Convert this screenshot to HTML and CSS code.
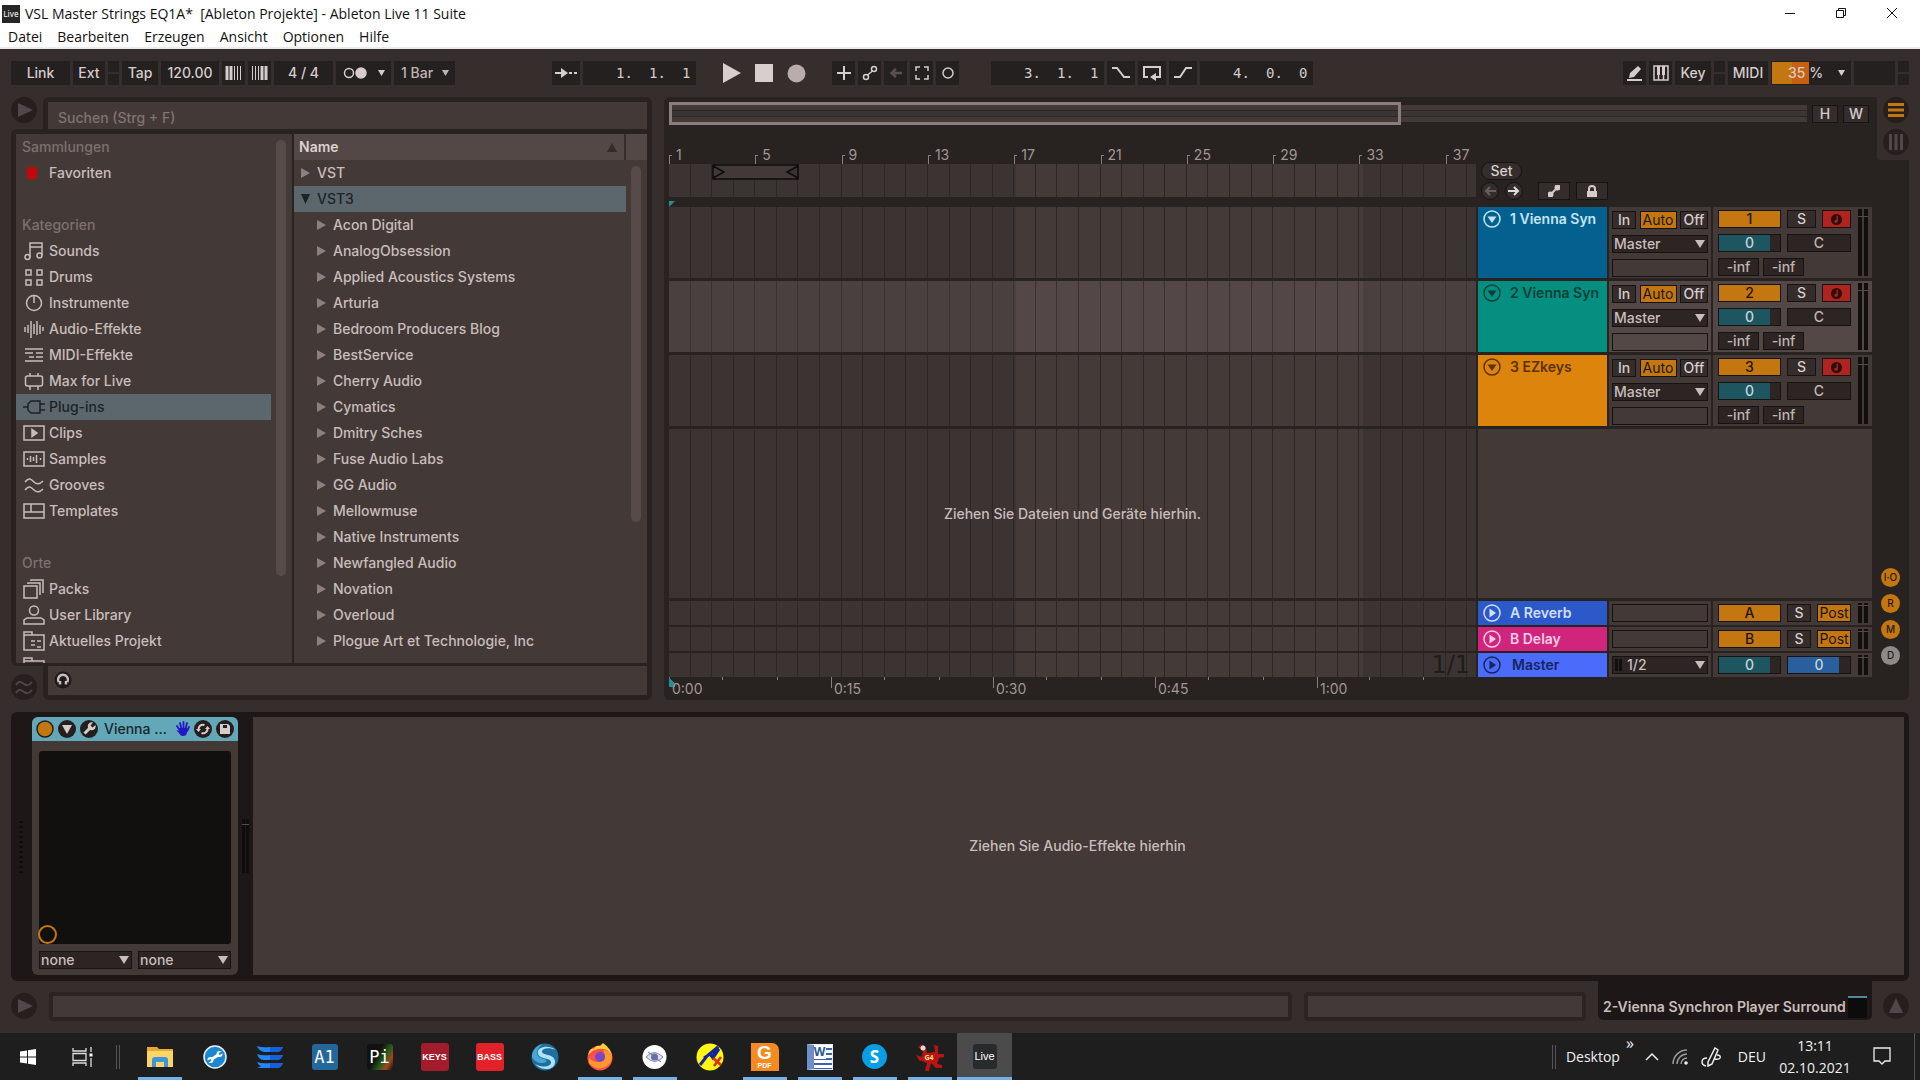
FILE: index.html
```html
<!DOCTYPE html>
<html lang="de">
<head>
  <meta charset="utf-8">
  <title>VSL Master Strings EQ1A* [Ableton Projekte] - Ableton Live 11 Suite</title>
  <link rel="stylesheet" href="styles.css">
</head>
<body>

<!-- Icons, die mehrfach vorkommen -->
<svg class="defs" aria-hidden="true">
  <symbol id="i-play" viewBox="0 0 26 26"><path d="M7 6v14l15-7z" fill="currentColor"/></symbol>
  <symbol id="i-fold" viewBox="0 0 18 18"><circle cx="9" cy="9" r="8" fill="none" stroke="currentColor" stroke-width="1.500"/><path d="M4.500 6.500h9L9 13z" fill="currentColor"/></symbol>
  <symbol id="i-launch" viewBox="0 0 18 18"><circle cx="9" cy="9" r="8" fill="none" stroke="currentColor" stroke-width="1.500"/><path d="M6.500 4.500v9L13 9z" fill="currentColor"/></symbol>
  <symbol id="i-note" viewBox="0 0 12 12"><circle cx="6" cy="6" r="6" fill="#2a0f0c"/><path d="M6 2h1.500v6a2 1.500 0 1 1-1.500-1.500z" fill="#b1231f"/></symbol>
  <symbol id="i-folder" viewBox="0 0 22 22"><path d="M1 5v15h20V5H1V2h8v3" /><path d="M8 11h4M14 11h4M8 15h4M14 17h4"/></symbol>
</svg>

<header class="window">
  <div class="titlebar">
    <span class="app-icon">Live</span>
    <span class="title">VSL Master Strings EQ1A*&nbsp; [Ableton Projekte] - Ableton Live 11 Suite</span>
    <div class="window-buttons">
      <button aria-label="Minimieren"><svg width="12" height="12"><path d="M1 6.500h10"/></svg></button>
      <button aria-label="Verkleinern"><svg width="12" height="12"><path d="M1.500 3.500h7v7h-7zM3.500 3.500v-2h7v7h-2"/></svg></button>
      <button aria-label="Schließen"><svg width="12" height="12"><path d="M1 1l10 10M11 1L1 11"/></svg></button>
    </div>
  </div>
  <nav class="menu">
    <a href="#">Datei</a><a href="#">Bearbeiten</a><a href="#">Erzeugen</a><a href="#">Ansicht</a><a href="#">Optionen</a><a href="#">Hilfe</a>
  </nav>
</header>

<main class="live">

  <div class="toolbar">
    <div class="group">
      <button class="tb w59">Link</button>
      <button class="tb w32">Ext</button>
      <span class="leds"></span>
      <button class="tb w36">Tap</button>
      <button class="tb w58">120.00</button>
      <button class="tb w23" aria-label="Tempo runter"><svg width="17" height="16"><path d="M2 1v14M6 1v14" stroke-width="3"/><path d="M9.500 1v14M12.500 1v14M15.500 1v14" stroke-width="1"/></svg></button>
      <button class="tb w23" aria-label="Tempo rauf"><svg width="17" height="16"><path d="M1.500 1v14M4.500 1v14M7.500 1v14" stroke-width="1"/><path d="M11 1v14M15 1v14" stroke-width="3"/></svg></button>
      <button class="tb w59 sig">4 / 4</button>
      <button class="tb w55 drop" aria-label="Metronom"><svg width="24" height="12"><circle cx="6" cy="6" r="4.500" fill="none"/><circle cx="18" cy="6" r="5" fill="currentColor"/></svg></button>
      <button class="tb w61 drop dim">1 Bar</button>
    </div>

    <div class="group transport">
      <button class="tb w28" aria-label="Folgen"><svg width="22" height="12"><path d="M0 6h9" stroke-width="2"/><path d="M6 1l7 5-7 5z" fill="currentColor" stroke="none"/><path d="M14 6h3M19 6h3" stroke-width="2"/></svg></button>
      <button class="tb pos"><span>1.</span><span>1.</span><span>1</span></button>
      <div class="play-keys">
        <button aria-label="Start"><svg width="18" height="20"><path d="M0 0v20l18-10z"/></svg></button>
        <button aria-label="Stopp"><svg width="18" height="18"><path d="M0 0h18v18H0z"/></svg></button>
        <button aria-label="Aufnahme" class="rec"><svg width="19" height="19"><circle cx="9.500" cy="9.500" r="9"/></svg></button>
      </div>
      <button class="tb w23" aria-label="Overdub"><svg width="14" height="14"><path d="M7 0v14M0 7h14" stroke-width="2"/></svg></button>
      <button class="tb w23" aria-label="Automation"><svg width="16" height="16"><circle cx="4" cy="12" r="2.500" fill="none"/><circle cx="12" cy="4" r="2.500" fill="none"/><path d="M5.500 10l5-4"/></svg></button>
      <button class="tb w23 off" aria-label="Automation reaktivieren"><svg width="14" height="12"><path d="M5 6h8M7 2L2.500 6 7 10" stroke-width="2.500" fill="none"/></svg></button>
      <button class="tb w23" aria-label="Capture"><svg width="14" height="14"><path d="M1 5V1h4M9 1h4v4M13 9v4H9M5 13H1V9" fill="none"/></svg></button>
      <button class="tb w23" aria-label="Session-Aufnahme"><svg width="14" height="14"><circle cx="7" cy="7" r="5" fill="none"/></svg></button>
      <button class="tb pos loop-pos"><span>3.</span><span>1.</span><span>1</span></button>
      <button class="tb w28" aria-label="Punch-in"><svg width="20" height="12"><path d="M1 1h5l7 9h6" fill="none" stroke-width="2"/></svg></button>
      <button class="tb w28" aria-label="Loop"><svg width="20" height="16"><path d="M6 12H2V2h16v10h-5" fill="none" stroke-width="2"/><path d="M14 8v8l-6-4z" fill="currentColor" stroke="none"/></svg></button>
      <button class="tb w28" aria-label="Punch-out"><svg width="20" height="12"><path d="M1 10h6l6-9h6" fill="none" stroke-width="2"/></svg></button>
      <button class="tb pos"><span>4.</span><span>0.</span><span>0</span></button>
    </div>

    <div class="group right">
      <button class="tb w23" aria-label="Zeichnen"><svg width="16" height="16"><path d="M2 13l1-5 8-7 3 3-7 8z" fill="currentColor" stroke="none"/><path d="M0 15h15" stroke-width="2"/></svg></button>
      <button class="tb w23" aria-label="Tastatur"><svg width="16" height="16"><path d="M1 1h14v14H1zM5.500 9v6M10.500 9v6" fill="none"/><path d="M5.500 1v9M10.500 1v9" stroke-width="3"/></svg></button>
      <button class="tb w36">Key</button>
      <span class="leds"></span>
      <button class="tb w40">MIDI</button>
      <button class="tb cpu drop"><i class="cpu-bar"></i><b>35 %</b></button>
      <span class="tb w41"></span>
      <span class="leds"></span>
    </div>
  </div>

  <div class="upper">

    <section class="browser">
      <div class="search-row">
        <button class="round" aria-label="Browser"><svg width="26" height="26"><use href="#i-play"/></svg></button>
        <div class="search-frame"><input type="text" aria-label="Suchen" placeholder="Suchen (Strg + F)"></div>
      </div>
      <div class="lists">
        <div class="places">
          <ul>
            <li class="head">Sammlungen</li>
            <li><i class="fav"></i>Favoriten</li>
            <li></li>
            <li class="head">Kategorien</li>
            <li><svg viewBox="0 0 22 22"><circle cx="4.500" cy="17" r="2.500"/><circle cx="16.500" cy="15.500" r="2.500"/><path d="M7 17V3h12v12.500M7 7h12"/></svg>Sounds</li>
            <li><svg viewBox="0 0 22 22"><path d="M3 4h5v5H3zM14 4h5v5h-5zM3 14h5v5H3zM14 14h5v5h-5z"/></svg>Drums</li>
            <li><svg viewBox="0 0 22 22"><circle cx="11" cy="11" r="7.500"/><path d="M11 3v8"/></svg>Instrumente</li>
            <li><svg viewBox="0 0 22 22"><path d="M2 9v5M5 7v8M8 3v17M11 6v10M14 3v14M17 7v9M20 9v4"/></svg>Audio-Effekte</li>
            <li><svg viewBox="0 0 22 22"><path d="M2 5h18M2 17h18M2 9h8M13 9h7M6 13h5M13 13h7"/></svg>MIDI-Effekte</li>
            <li><svg viewBox="0 0 22 22"><rect x="2.500" y="6" width="17" height="10" rx="2"/><path d="M7 3v3M15 3v3M7 16v4M15 16v4"/></svg>Max for Live</li>
            <li class="selected"><svg viewBox="0 0 22 22"><path d="M0 11h5M8 5h9v12H8l-3-3V8zM17 8h5M17 14h5"/></svg>Plug-ins</li>
            <li><svg viewBox="0 0 22 22"><path d="M1 4h20v14H1z"/><path d="M9 7.500v7l5-3.500z" fill="currentColor"/></svg>Clips</li>
            <li><svg viewBox="0 0 22 22"><path d="M1 4h20v14H1zM4.500 10v2M7.500 8v6M10.500 9v4M13.500 7v8M17.500 10v2"/></svg>Samples</li>
            <li><svg viewBox="0 0 22 22"><path d="M2 8c4-5 6-3 9 0s6 2 9-1M2 16c4-5 6-3 9 0s6 2 9-1"/></svg>Grooves</li>
            <li><svg viewBox="0 0 22 22"><path d="M1 4h20v14H1zM1 12h20M8 4v8"/></svg>Templates</li>
            <li></li>
            <li class="head">Orte</li>
            <li><svg viewBox="0 0 22 22"><path d="M1 8h13v12H1zM5 6V5h12v12M8 3V2h12v13"/></svg>Packs</li>
            <li><svg viewBox="0 0 22 22"><circle cx="11" cy="6.500" r="4.500"/><path d="M1 20v-4l3-2h14l3 2v4z"/></svg>User Library</li>
            <li><svg><use href="#i-folder"/></svg>Aktuelles Projekt</li>
            <li><svg><use href="#i-folder"/></svg></li>
          </ul>
          <i class="scroll"></i>
        </div>
        <div class="content">
          <div class="col-head"><span>Name</span><i class="sort"></i></div>
          <div class="tree">
            <ul>
              <li class="top">VST</li>
              <li class="top open">VST3</li>
              <li>Acon Digital</li>
              <li>AnalogObsession</li>
              <li>Applied Acoustics Systems</li>
              <li>Arturia</li>
              <li>Bedroom Producers Blog</li>
              <li>BestService</li>
              <li>Cherry Audio</li>
              <li>Cymatics</li>
              <li>Dmitry Sches</li>
              <li>Fuse Audio Labs</li>
              <li>GG Audio</li>
              <li>Mellowmuse</li>
              <li>Native Instruments</li>
              <li>Newfangled Audio</li>
              <li>Novation</li>
              <li>Overloud</li>
              <li>Plogue Art et Technologie, Inc</li>
            </ul>
            <i class="scroll"></i>
          </div>
        </div>
      </div>
      <div class="preview-row">
        <button class="round" aria-label="Groove Pool"><svg width="26" height="26"><path d="M5 11c3-5 5-3 8-1s5 2 8-2M5 19c3-5 5-3 8-1s5 2 8-2" fill="none" stroke="currentColor" stroke-width="2"/></svg></button>
        <div class="preview-frame"><div class="preview"><button aria-label="Vorhören"><svg width="18" height="18"><circle cx="9" cy="9" r="8.500" fill="#1f1a19"/><path d="M6 13.500V10M12 13.500V10M4.500 11a5 5 0 1 1 9 0" fill="none" stroke="#c9bdbb" stroke-width="2.500"/></svg></button></div></div>
      </div>
    </section>

    <section class="arrangement">
      <div class="arr-main">
        <div class="overview-row">
          <div class="overview"><i class="view-box"></i></div>
          <button class="btn w26">H</button>
          <button class="btn w26">W</button>
        </div>

        <div class="time-head">
          <div>
            <div class="bars"><span>1</span><span>5</span><span>9</span><span>13</span><span>17</span><span>21</span><span>25</span><span>29</span><span>33</span><span>37</span></div>
            <div class="scrub grid-lines"><i class="loop"><svg width="87" height="16"><path d="M1 1h85v14H1zM1 2l11 6-11 6M86 2L75 8l11 6"/></svg></i></div>
            <i class="insert"></i>
          </div>
          <div class="locators">
            <button class="set">Set</button>
            <div class="loc-row">
              <button class="circ off" aria-label="Voriger Locator"><svg width="12" height="10"><path d="M12 5H3M6 1L2 5l4 4"/></svg></button>
              <button class="circ" aria-label="Nächster Locator"><svg width="12" height="10"><path d="M0 5h9M6 1l4 4-4 4"/></svg></button>
              <button class="btn w32 first" aria-label="Automation anzeigen"><svg width="12" height="12"><path d="M2.500 9.500l7-7"/><circle cx="2.500" cy="9.500" r="2" fill="currentColor"/><circle cx="9.500" cy="2.500" r="2" fill="currentColor"/></svg></button>
              <button class="btn w32" aria-label="Hüllkurven sperren"><svg width="12" height="12"><path d="M1 6h10v6H1z" fill="currentColor" stroke="none"/><path d="M3 6V4a3 3 0 0 1 6 0v2" fill="none"/></svg></button>
            </div>
          </div>
        </div>

        <div class="tracks">
          <div class="track">
            <div class="lane grid-lines"></div>
            <div class="name blue"><svg><use href="#i-fold"/></svg>1 Vienna Syn</div>
            <div class="io">
              <div class="row"><button class="btn w24">In</button><button class="btn w37 on thin">Auto</button><button class="btn w28">Off</button></div>
              <span class="select"><select aria-label="Ausgang Spur 1"><option>Master</option></select></span>
              <span class="slot"></span>
            </div>
            <div class="mix">
              <div class="row"><button class="btn w63 on">1</button><button class="btn w29">S</button><button class="btn w29 arm" aria-label="Scharf"><svg width="11" height="11"><use href="#i-note"/></svg></button></div>
              <div class="row"><span class="btn w63 vol">0</span><span class="btn w64 dim">C</span></div>
              <div class="row tight"><span class="btn w41 dim">-inf</span><span class="btn w41 dim">-inf</span></div>
              <i class="meter"></i>
            </div>
          </div>
          <div class="track active">
            <div class="lane grid-lines"></div>
            <div class="name green"><svg><use href="#i-fold"/></svg>2 Vienna Syn</div>
            <div class="io">
              <div class="row"><button class="btn w24">In</button><button class="btn w37 on thin">Auto</button><button class="btn w28">Off</button></div>
              <span class="select"><select aria-label="Ausgang Spur 2"><option>Master</option></select></span>
              <span class="slot"></span>
            </div>
            <div class="mix">
              <div class="row"><button class="btn w63 on">2</button><button class="btn w29">S</button><button class="btn w29 arm" aria-label="Scharf"><svg width="11" height="11"><use href="#i-note"/></svg></button></div>
              <div class="row"><span class="btn w63 vol">0</span><span class="btn w64 dim">C</span></div>
              <div class="row tight"><span class="btn w41 dim">-inf</span><span class="btn w41 dim">-inf</span></div>
              <i class="meter"></i>
            </div>
          </div>
          <div class="track">
            <div class="lane grid-lines"></div>
            <div class="name orange"><svg><use href="#i-fold"/></svg>3 EZkeys</div>
            <div class="io">
              <div class="row"><button class="btn w24">In</button><button class="btn w37 on thin">Auto</button><button class="btn w28">Off</button></div>
              <span class="select"><select aria-label="Ausgang Spur 3"><option>Master</option></select></span>
              <span class="slot"></span>
            </div>
            <div class="mix">
              <div class="row"><button class="btn w63 on">3</button><button class="btn w29">S</button><button class="btn w29 arm" aria-label="Scharf"><svg width="11" height="11"><use href="#i-note"/></svg></button></div>
              <div class="row"><span class="btn w63 vol">0</span><span class="btn w64 dim">C</span></div>
              <div class="row tight"><span class="btn w41 dim">-inf</span><span class="btn w41 dim">-inf</span></div>
              <i class="meter"></i>
            </div>
          </div>
          <div class="empty">
            <div class="lane grid-lines hint">Ziehen Sie Dateien und Geräte hierhin.</div>
            <div class="blank"></div>
          </div>
        </div>

        <div class="returns">
          <div class="track">
            <div class="lane grid-lines"></div>
            <div class="name reverb"><svg><use href="#i-launch"/></svg>A Reverb</div>
            <div class="io"><span class="slot"></span></div>
            <div class="mix">
              <div class="row"><button class="btn w63 on">A</button><button class="btn w24">S</button><button class="btn w34 on thin">Post</button></div>
              <i class="meter"></i>
            </div>
          </div>
          <div class="track">
            <div class="lane grid-lines"></div>
            <div class="name delay"><svg><use href="#i-launch"/></svg>B Delay</div>
            <div class="io"><span class="slot"></span></div>
            <div class="mix">
              <div class="row"><button class="btn w63 on">B</button><button class="btn w24">S</button><button class="btn w34 on thin">Post</button></div>
              <i class="meter"></i>
            </div>
          </div>
          <div class="track">
            <div class="lane grid-lines quant">1/1</div>
            <div class="name master"><svg><use href="#i-launch"/></svg>Master</div>
            <div class="io"><span class="select cue"><select aria-label="Ausgang Master"><option>1/2</option></select></span></div>
            <div class="mix">
              <div class="row"><span class="btn w63 vol">0</span><span class="btn w64 vol cuevol">0</span></div>
              <i class="meter"></i>
            </div>
          </div>
        </div>

        <div class="seconds"><span>0:00</span><span>0:15</span><span>0:30</span><span>0:45</span><span>1:00</span></div>
      </div>

      <div class="arr-side">
        <div class="views">
          <button class="round lit" aria-label="Arrangement"><svg width="26" height="26"><path d="M5 7.500h16M5 13h16M5 18.500h16" stroke="currentColor" stroke-width="3"/></svg></button>
          <button class="round" aria-label="Session"><svg width="26" height="26"><path d="M7.500 5v16M13 5v16M18.500 5v16" stroke="currentColor" stroke-width="3"/></svg></button>
        </div>
        <div class="toggles">
          <button>I·O</button><button>R</button><button>M</button><button class="grey">D</button>
        </div>
      </div>
    </section>
  </div>

  <section class="devices">
    <div class="grip"></div>
    <div class="device">
      <div class="dev-head">
        <svg width="18" height="18"><circle cx="9" cy="9" r="8" fill="#c47711" stroke="#241f1e" stroke-width="1.500"/></svg>
        <svg width="18" height="18"><circle cx="9" cy="9" r="9" fill="#241f1e"/><path d="M4 5h10l-5 9z" fill="#d5cccb"/></svg>
        <svg width="18" height="18"><circle cx="9" cy="9" r="9" fill="#241f1e"/><path d="M4.500 13.500l6-6" stroke="#d5cccb" stroke-width="3"/><path d="M13 2.500l-2.500 3 2 2 3-2.500a4 4 0 1 1-2.500-2.500z" fill="#d5cccb"/></svg>
        <span>Vienna ...</span>
        <svg width="14" height="16"><path d="M3.500 9L1 5M5.500 8L4 2M7.500 8V1M9.500 8l1.500-6M11 10l2-4" stroke="#2416c4" stroke-width="1.800" stroke-linecap="round"/><path d="M0 9l3 1V7h8v4c0 3-2 4-4 4s-3-1-4-3z" fill="#2416c4"/></svg>
        <svg width="18" height="18"><circle cx="9" cy="9" r="9" fill="#241f1e"/><path d="M4.500 10a4.500 4.500 0 0 1 6-5M13.500 8a4.500 4.500 0 0 1-6 5" fill="none" stroke="#d5cccb" stroke-width="2"/><path d="M2 9h5l-2.500 3zM16 9h-5l2.500-3z" fill="#d5cccb"/></svg>
        <svg width="18" height="18"><circle cx="9" cy="9" r="9" fill="#241f1e"/><path d="M4 4h8l2 2v8H4z" fill="#d5cccb"/><path d="M7 5h4v3H7z" fill="#241f1e"/></svg>
      </div>
      <div class="dev-body">
        <div class="xy"></div>
        <div class="dev-selects">
          <span class="select"><select aria-label="X-Achse"><option>none</option></select></span>
          <span class="select"><select aria-label="Y-Achse"><option>none</option></select></span>
        </div>
      </div>
    </div>
    <div class="dev-meter"></div>
    <div class="dev-drop">Ziehen Sie Audio-Effekte hierhin</div>
  </section>

  <footer class="status">
    <button class="round" aria-label="Info"><svg width="26" height="26"><use href="#i-play"/></svg></button>
    <div class="info wide"></div>
    <div class="info"></div>
    <div class="tab">2-Vienna Synchron Player Surround<i></i></div>
    <button class="round" aria-label="Geräteansicht"><svg width="26" height="26"><path d="M13 5l7 15H6z" fill="currentColor"/></svg></button>
  </footer>
</main>

<div class="taskbar">
  <button class="cell" aria-label="Start"><svg width="16" height="16"><path d="M0 2.500l7-1V7.500H0zM8 1.300L16 0v7.500H8zM0 8.500h7v6l-7-1zM8 8.500h8V16l-8-1.300z" fill="#fff"/></svg></button>
  <button class="cell" aria-label="Taskansicht"><svg width="22" height="20"><path d="M1 1v3h13V1M1 19v-3h13v3M1 6.500h13v7H1zM19 0v5M19 11v9" fill="none" stroke="#ddd" stroke-width="1.300"/><path d="M17.500 6.500h3v3h-3z" fill="#fff"/></svg></button>
  <i class="sep"></i>
  <div class="apps">
    <button class="cell run" aria-label="Explorer"><svg width="26" height="22"><path d="M0 1h10l2 2h14v18H0z" fill="#e8a92c"/><path d="M0 5h26v16H0z" fill="#fbd565"/><path d="M5 21v-7q0-3 3-3h10q3 0 3 3v7h-4v-5H9v5z" fill="#3d94dd"/></svg></button>
    <button class="cell" aria-label="Werkzeug"><svg width="24" height="24"><circle cx="12" cy="12" r="11" fill="#1c87d0" stroke="#e8f4fb" stroke-width="1.500"/><path d="M8 14.500l8-5" stroke="#fff" stroke-width="3"/><circle cx="7.500" cy="15" r="3" fill="#fff"/><circle cx="16.500" cy="9" r="3" fill="#fff"/><path d="M4 17l4-2M20 7l-4 2" stroke="#1c87d0" stroke-width="2"/></svg></button>
    <button class="cell" aria-label="Engine"><svg width="28" height="24"><path d="M1 1q5 2 13 1h13q-2 5-6 5H8Q3 6 1 1zM1 9q5 2 13 1h13q-2 5-6 5H8q-5 0-7-6zM1 17q5 2 13 1h13q-2 5-6 5H1q3-1 4-2-3-1-4-4z" fill="#2386f5"/><path d="M14 2h13q-2 5-6 5h-7zM14 10h13q-2 5-6 5h-7zM14 18h13q-2 5-6 5h-7z" fill="#1560d8"/></svg></button>
    <button class="cell"><span class="tile mono sky">A1</span></button>
    <button class="cell"><span class="tile mono pi">Pi</span></button>
    <button class="cell"><span class="tile keys">KEYS</span></button>
    <button class="cell"><span class="tile bass">BASS</span></button>
    <button class="cell" aria-label="Synchron"><svg width="28" height="28"><circle cx="14" cy="14" r="13.500" fill="#1f6e9e"/><path d="M25 7C17 1 5 4 7 11c2 6 14 3 13 9-1 4-8 5-16 1 7 8 21 6 20-3-1-8-14-5-13-10 1-3 7-4 14-1z" fill="#a9e3f8"/><path d="M1 14C1 7 6 2 12 1 2 8 6 15 13 16c4 1 3 4-2 4-4 0-8-2-10-6z" fill="#48a7d5"/></svg></button>
    <button class="cell run" aria-label="Firefox"><svg width="26" height="28"><circle cx="13" cy="15" r="12.500" fill="#ff4f4a"/><path d="M1 12Q3 4 7 6q2-4 6-3l3-3q9 6 9 15-1-5-5-8Q9 3 1 12z" fill="#ffcf35"/><path d="M2 20q8 9 18 3 5-4 5-9-4-8-9-7 5 8-1 11-7 3-13-3z" fill="#ff9a2a"/><circle cx="13" cy="14" r="5" fill="#7a45c9"/></svg></button>
    <button class="cell run" aria-label="Auge"><svg width="25" height="26"><circle cx="12.500" cy="13" r="12" fill="#fff"/><path d="M4 13q8-9 17 0-8 9-17 0z" fill="#dfe2ee" stroke="#8289ab"/><circle cx="12.500" cy="13" r="3.500" fill="#6a71a0"/><path d="M6 8l13 10" stroke="#6a71a0"/></svg></button>
    <button class="cell" aria-label="Tool"><svg width="28" height="28"><circle cx="14" cy="14" r="13.500" fill="#fff714"/><path d="M4 22l7-9 11-9-5 9M8 15l6-4 3 4 6-9" stroke="#15239c" stroke-width="3" fill="none"/><path d="M17 15l8 7M25 14l-7 9" stroke="#e32a16" stroke-width="2.500"/></svg></button>
    <button class="cell run"><span class="tile pdf"><b>G</b>PDF</span></button>
    <button class="cell run"><span class="word"><b>W</b></span></button>
    <button class="cell run"><span class="skype">S</span></button>
    <button class="cell run" aria-label="G4"><span class="devil"><svg width="28" height="28"><path d="M2 4q5-5 8 1l1 5 8-1-1-7 4 1v8h6v3l-5 1-2 6 5 1v3h-6l-5-5-2 8H9l2-8-8-3-3-5 6 2 1-6z" fill="#b71413"/><circle cx="7" cy="5" r="2.500" fill="#ddd"/></svg><b>G4</b></span></button>
    <button class="cell run current"><span class="tile live-icon">Live</span></button>
  </div>
  <div class="tray">
    <i class="sep"></i>
    <span class="desktop">Desktop</span><span class="more">»</span>
    <svg width="14" height="9"><path d="M1 8l6-6 6 6" fill="none" stroke="#eee" stroke-width="1.500"/></svg>
    <svg width="16" height="16"><path d="M1 15A14 14 0 0 1 15 1M5 15A10 10 0 0 1 15 5M9 15A6 6 0 0 1 15 9" fill="none" stroke="#999" stroke-width="1.500"/><circle cx="14" cy="14" r="1.800" fill="#eee"/></svg>
    <svg width="20" height="20"><path d="M7 15L14 1l3 2-6 14-4 2zM6 11q-5 0-5 4 0 3 4 4M16 8q4 0 3 3-1 2-6 1" fill="none" stroke="#eee" stroke-width="1.500"/></svg>
    <span>DEU</span>
    <span class="clock">13:11<br>02.10.2021</span>
    <svg class="note" width="18" height="19"><path d="M1 1h16v13h-5l-3 3-3-3H1z" fill="none" stroke="#eee" stroke-width="1.300"/></svg>
    <i class="edge"></i>
  </div>
</div>

</body>
</html>
```
FILE: styles.css
```css
*, *::before, *::after { box-sizing: border-box; }

body {
  margin: 0;
  min-height: 100vh;
  display: flex;
  flex-direction: column;
  font-family: Inter, "Liberation Sans", sans-serif;
  font-size: 14px;
  font-weight: 500;
  line-height: 18px;
  color: #c9bdbb;
  background: #352e2d;
}

button {
  font: inherit;
  color: inherit;
  background: none;
  border: 0;
  padding: 0;
}

ul { list-style: none; margin: 0; padding: 0; }
svg { flex: none; }
.defs { display: none; }

/* Fenster */
.window {
  height: 49px;
  background: #fff;
  border-bottom: 2px solid #eceaea;
  color: #111;
  font-family: "Open Sans", "Noto Sans", sans-serif;
  font-weight: 400;
}
.titlebar {
  display: flex;
  align-items: center;
  height: 27px;
  padding: 0 3px 0 2px;
  gap: 5px;
}
.app-icon {
  width: 18px;
  height: 18px;
  background: #262626;
  color: #ddd;
  font-size: 8px;
  font-weight: 600;
  text-align: center;
}
.window-buttons { margin-left: auto; display: flex; }
.window-buttons button { width: 51px; height: 24px; }
.window-buttons svg { fill: none; stroke: #111; }
.menu { display: flex; gap: 15px; padding-left: 8px; }
.menu a { color: #111; text-decoration: none; line-height: 20px; }

/* Transportleiste */
.live {
  flex: 1;
  display: flex;
  flex-direction: column;
  gap: 12px;
  padding: 12px 11px 13px;
}
.toolbar { display: flex; height: 24px; }
.group { display: flex; gap: 3px; }
.transport { margin-left: 97px; }
.right { margin-left: auto; }
.tb {
  height: 24px;
  background: #242020;
  color: #d5cccb;
  display: flex;
  align-items: center;
  justify-content: center;
  white-space: nowrap;
}
.tb svg { stroke: currentColor; stroke-width: 1.500; fill: none; }
.tb.off { color: #5a504f; }
.dim { color: #c0b4b2; }
.leds {
  width: 11px;
  background: linear-gradient(#242020 11px, #352e2d 11px, #352e2d 13px, #242020 13px);
}
.drop { justify-content: space-between; padding: 0 6px 0 7px; }
.drop::after {
  content: "";
  width: 7px;
  height: 6px;
  background: currentColor;
  clip-path: polygon(0 0, 100% 0, 50% 100%);
}
.pos {
  width: 113px;
  justify-content: flex-end;
  padding-right: 5px;
  font-family: "DejaVu Sans Mono", monospace;
  font-weight: 400;
  text-align: left;
}
.pos span { width: 33px; }
.pos span:last-child { width: 9px; }
.loop-pos { margin-left: 29px; }
.play-keys { display: flex; align-items: center; gap: 14px; margin: 0 23px 0 24px; }
.play-keys button { height: 20px; display: flex; align-items: center; }
.play-keys svg { fill: #d8cecd; }
.play-keys .rec svg { fill: #b9adab; }
.cpu { width: 80px; position: relative; padding-left: 17px; }
.cpu b { font-weight: 500; position: relative; }
.cpu-bar { position: absolute; left: 1px; top: 1px; bottom: 1px; width: 37px; background: linear-gradient(90deg, #c47711 55%, #c8600f 55%); }

.w23 { width: 23px; } .w24 { width: 24px; } .w26 { width: 26px; } .w28 { width: 28px; }
.w29 { width: 29px; } .w32 { width: 32px; } .w34 { width: 34px; } .w36 { width: 36px; }
.w37 { width: 37px; } .w40 { width: 40px; } .w41 { width: 41px; } .w55 { width: 55px; }
.w58 { width: 58px; } .w59 { width: 59px; } .w61 { width: 61px; } .w63 { width: 63px; }
.w64 { width: 64px; }

.round {
  width: 26px;
  height: 26px;
  flex: none;
  border-radius: 50%;
  background: #261f1e;
  color: #51474a;
}
.round svg { display: block; }
.round.lit { color: #c47711; }

.upper { flex: 1; display: flex; gap: 12px; }

/* Browser */
.browser { width: 641px; display: flex; flex-direction: column; }
.search-row { display: flex; gap: 6px; height: 32px; }
.search-frame {
  flex: 1;
  background: #282221;
  border-radius: 6px 6px 0 0;
  padding: 5px 5px 0 5px;
}
.search-frame input {
  width: 100%;
  height: 27px;
  border: 0;
  background: #433a38;
  padding: 3px 10px 0;
  font: inherit;
}
.search-frame input::placeholder { color: #807371; opacity: 1; }
.lists {
  flex: 1 1 0;
  min-height: 0;
  background: #282221;
  border-radius: 6px 0 0 6px;
  padding: 5px 5px 3px;
  display: flex;
  gap: 2px;
}
.places, .content { background: #433a38; overflow: hidden; }
.places { width: 276px; flex: none; display: flex; }
.places ul { width: 255px; }
.places li {
  height: 26px;
  display: flex;
  align-items: center;
  padding-left: 7px;
  gap: 4px;
}
.places .head { color: #7d706e; padding-left: 6px; }
.places li svg { width: 22px; height: 22px; fill: none; stroke: currentColor; stroke-width: 1.500; }
.places .selected { background: #5b676d; color: #1d2225; }
#i-folder path { fill: none; }
.fav { width: 10px; height: 12px; margin: 0 8px 0 4px; background: #c60606; border-radius: 2px; }
.scroll { width: 10px; border-radius: 5px; background: #574b4a; margin: 6px 0 87px 5px; flex: none; }
.content { flex: 1; display: flex; flex-direction: column; }
.col-head {
  height: 26px;
  background: #544847;
  display: flex;
  align-items: center;
  justify-content: space-between;
  padding: 0 0 0 5px;
  font-weight: 600;
  color: #dcd2d1;
}
.sort { width: 38px; height: 26px; display: block; position: relative; margin-right: 5px; }
.sort::before {
  content: "";
  position: absolute;
  left: 3px;
  top: 9px;
  width: 10px;
  height: 9px;
  background: #342c2b;
  clip-path: polygon(50% 0, 100% 100%, 0 100%);
}
.sort::after { content: ""; position: absolute; left: 20px; top: 0; width: 2px; height: 26px; background: #352d2c; }
.tree { flex: 1; display: flex; min-height: 0; }
.tree ul { width: 332px; }
.tree .scroll { margin: 6px 0 141px 5px; }
.tree li {
  height: 26px;
  display: flex;
  align-items: center;
  padding-left: 23px;
  gap: 7px;
}
.tree li::before {
  content: "";
  width: 9px;
  height: 10px;
  background: #8d807e;
  clip-path: polygon(0 0, 100% 50%, 0 100%);
}
.tree li.top { padding-left: 7px; }
.tree li.open { background: #5b676d; color: #1d2225; }
.tree li.open::before { background: #1d2225; clip-path: polygon(0 0, 100% 0, 50% 100%); }
.preview-row { display: flex; gap: 6px; height: 34px; align-items: flex-end; }
.preview-frame { flex: 1; height: 34px; background: #282221; border-radius: 0 0 6px 6px; padding: 0 5px 5px; }
.preview { background: #433a38; height: 29px; padding: 5px 6px; }
.preview svg { display: block; }

/* Arrangement */
.arrangement { flex: 1; display: flex; background: #282221; border-radius: 6px; }
.arr-main { flex: 1; display: flex; flex-direction: column; padding: 5px 0 0 5px; }
.arr-side { width: 37px; display: flex; flex-direction: column; justify-content: space-between; }
.overview-row { display: flex; gap: 5px; align-items: center; height: 23px; padding-right: 3px; }
.overview {
  flex: 1;
  height: 23px;
  background: linear-gradient(transparent 3px, #433a38 3px, #433a38 8px, #2d2625 8px, #2d2625 9px, #3b3534 9px, #3b3534 14px, #2d2625 14px, #2d2625 15px, #433a38 15px, #433a38 20px, transparent 20px);
}
.view-box { display: block; width: calc(100% * 74 / 115); height: 23px; border: 3px solid #8b7d7b; }
.btn {
  height: 18px;
  border: 1px solid #171312;
  background: #352d2c;
  color: #d5cccb;
  display: inline-flex;
  align-items: center;
  justify-content: center;
  line-height: 16px;
}
.btn.dim { background: #2c2524; color: #c0b4b2; }
.btn.on { background: #c47711; color: #1c1410; }
.btn.thin { font-weight: 400; }
.btn.arm { background: #b1231f; }
.time-head { display: grid; grid-template-columns: 1fr 394px; gap: 2px; margin-top: 22px; height: 60px; }
.bars { display: grid; grid-template-columns: repeat(9, 40fr) 14fr; height: 17px; }
.bars span {
  padding-left: 7px;
  line-height: 16px;
  font-weight: 400;
  color: #a39694;
  background:
    linear-gradient(#8b7d7b, #8b7d7b) 0 8px / 1px 9px no-repeat,
    linear-gradient(#8b7d7b, #8b7d7b) 0 8px / 3px 1px no-repeat;
}
.grid-lines {
  --line: #2d2625;
  --dark: #3c3433;
  --light: #443b38;
  background:
    repeating-linear-gradient(90deg, transparent 0, transparent calc(100% * 10 / 374 - 1px), var(--line) calc(100% * 10 / 374 - 1px), var(--line) calc(100% * 10 / 374)),
    linear-gradient(90deg, var(--dark) 43%, var(--light) 43%, var(--light) 86%, var(--dark) 86%);
}
.active .grid-lines { --line: #3a3130; --dark: #4a4040; --light: #534847; }
.scrub { height: 33px; }
.loop { display: block; margin-left: calc(100% * 20 / 374); height: 16px; }
.loop svg { display: block; fill: #433a38; stroke: #0e0b0b; stroke-width: 1.500; }
.insert { display: block; margin-top: 4px; width: 6px; height: 6px; background: #2a8c9a; clip-path: polygon(0 0, 100% 0, 0 100%); }
.locators { padding: 15px 0 0 3px; }
.set { display: block; width: 41px; height: 18px; border: 1px solid #171312; border-radius: 9px; background: #352d2c; color: #d5cccb; line-height: 16px; }
.loc-row { display: flex; align-items: center; gap: 6px; margin-top: 2px; }
.loc-row svg { fill: none; stroke: currentColor; stroke-width: 2; }
.circ { width: 18px; height: 18px; border-radius: 50%; border: 1px solid #171312; background: #352d2c; color: #e4dcdb; display: flex; align-items: center; justify-content: center; }
.circ.off { color: #6b605e; }
.first { margin-left: 9px; }

.tracks, .returns { display: flex; flex-direction: column; gap: 3px; }
.tracks { flex: 1; }
.returns { gap: 2px; margin-top: 3px; }
.track { display: grid; grid-template-columns: 1fr 129px 102px 159px; gap: 2px; }
.tracks .track { height: 71px; }
.returns .track { height: 24px; }
.empty { flex: 1; display: grid; grid-template-columns: 1fr 394px; gap: 2px; }
.blank, .io, .mix { background: #433a38; }
.active .io, .active .mix { background: #544847; }
.hint { display: flex; align-items: center; justify-content: center; }
.name {
  display: flex;
  align-items: flex-start;
  gap: 9px;
  padding: 3px 0 0 5px;
  font-weight: 600;
  overflow: hidden;
  white-space: nowrap;
}
.name svg { width: 18px; height: 18px; }
.blue { background: #04608f; color: #c5e4f4; }
.green { background: #058f80; color: #063f3a; }
.orange { background: #dc840b; color: #5a3206; }
.reverb { background: #2c59c9; color: #d3defa; }
.delay { background: #d1257d; color: #f8cde2; }
.master { background: #4b6cfa; color: #16245f; gap: 11px; }
.io { padding: 4px 3px 0; display: flex; flex-direction: column; gap: 6px; }
.io .row { display: flex; justify-content: space-between; }
.mix { position: relative; padding: 3px 0 0 5px; display: flex; flex-direction: column; gap: 6px; }
.mix .row { display: flex; gap: 6px; }
.mix .tight { gap: 4px; }
.returns .io, .returns .mix { padding-top: 3px; }
.slot { display: block; height: 18px; border: 1px solid #171312; }
.select { display: block; position: relative; height: 18px; }
.select select {
  appearance: none;
  width: 100%;
  height: 18px;
  border: 1px solid #171312;
  border-radius: 0;
  background: #2c2524;
  color: #c9bdbb;
  font: inherit;
  line-height: 16px;
  padding: 0 1px;
}
.select::after {
  content: "";
  position: absolute;
  right: 3px;
  top: 5px;
  width: 10px;
  height: 8px;
  background: #c9bdbb;
  clip-path: polygon(0 0, 100% 0, 50% 100%);
}
.select.cue select { padding-left: 14px; }
.cue::before { content: ""; position: absolute; left: 3px; top: 3px; width: 7px; height: 12px; border: solid #110e0d; border-width: 0 3px; }
.vol { background: linear-gradient(90deg, #1d5560 83%, #2c2524 83%); color: #c9d4d6; }
.cuevol { background: linear-gradient(90deg, #285f9c 83%, #2c2524 83%); }
.meter {
  position: absolute;
  right: 4px;
  top: 2px;
  bottom: 2px;
  width: 10px;
  background: linear-gradient(#544a48, #544a48) 0 7px / 10px 1px no-repeat,
    linear-gradient(90deg, #110e0d 4px, transparent 4px, transparent 6px, #110e0d 6px);
}
.returns .meter { background-position: 0 2px, 0 0; }
.quant {
  text-align: right;
  padding-right: 6px;
  font-family: "DejaVu Sans", sans-serif;
  font-size: 24px;
  line-height: 24px;
  font-weight: 400;
  color: #211b1a;
}
.seconds { display: grid; grid-template-columns: repeat(4, 162fr) 159fr; width: calc(100% - 396px); height: 23px; }
.seconds span {
  padding: 3px 0 0 3px;
  font-weight: 400;
  color: #a39694;
  background:
    linear-gradient(#8b7d7b, #8b7d7b) 0 0 / 1px 11px no-repeat,
    linear-gradient(#8b7d7b, #8b7d7b) 33% 0 / 1px 3px no-repeat,
    linear-gradient(#8b7d7b, #8b7d7b) 67% 0 / 1px 3px no-repeat;
}
.seconds span:first-child {
  background:
    conic-gradient(from 135deg at 0 0, #2a8c9a 45deg, transparent 45deg) 0 0 / 6px 10px no-repeat,
    linear-gradient(#8b7d7b, #8b7d7b) 33% 0 / 1px 3px no-repeat,
    linear-gradient(#8b7d7b, #8b7d7b) 67% 0 / 1px 3px no-repeat;
}
.views { width: 32px; height: 63px; margin-left: 5px; background: #352e2d; padding-left: 6px; border-bottom-left-radius: 3px; }
.views .round { display: block; margin-bottom: 6px; }
.toggles { display: flex; flex-direction: column; gap: 7px; padding: 0 0 35px 9px; }
.toggles button { width: 19px; height: 19px; border-radius: 50%; background: #c47711; color: #241a12; font-size: 10px; line-height: 19px; }
.toggles .grey { background: #8f8a89; }

/* Geräte */
.devices { height: 269px; display: flex; background: #1d1817; border-radius: 6px; padding: 5px 5px 6px 0; }
.grip { width: 4px; height: 54px; margin: 104px 9px 0 8px; background: repeating-linear-gradient(#110d0d 0, #110d0d 2px, transparent 2px, transparent 5px); }
.device { width: 206px; border-radius: 6px; background: #433a38; overflow: hidden; }
.dev-head { height: 24px; background: #62a8b9; color: #17262a; display: flex; align-items: center; gap: 4px; padding: 0 4px; }
.dev-head span { flex: 1; padding-left: 2px; white-space: nowrap; }
.dev-body { padding: 10px 7px 0; }
.xy { height: 193px; border-radius: 3px; background: #12100e; position: relative; }
.xy::after { content: ""; position: absolute; left: -1px; bottom: 0; width: 19px; height: 19px; border: 2px solid #c47711; border-radius: 50%; }
.dev-selects { display: grid; grid-template-columns: 1fr 1fr; gap: 6px; margin-top: 7px; }
.dev-meter { width: 7px; height: 54px; margin: 102px 4px 0; background: linear-gradient(#554b49, #554b49) 0 5px / 7px 1px no-repeat, linear-gradient(90deg, #0f0c0b 3px, transparent 3px, transparent 4px, #0f0c0b 4px); }
.dev-drop { flex: 1; background: #433a38; display: flex; align-items: center; justify-content: center; padding-right: 2px; }

.status { display: flex; height: 28px; align-items: center; margin-top: -1px; }
.info { width: 282px; height: 29px; border: 4px solid #2b2423; border-radius: 4px; background: #433a38; margin-right: 12px; }
.info.wide { flex: 1; margin-left: 12px; }
.tab { align-self: flex-end; width: 274px; height: 41px; background: #1d1817; border-radius: 0 0 5px 5px; padding: 14px 5px 0 5px; display: flex; align-items: center; justify-content: space-between; font-weight: 600; white-space: nowrap; margin-right: 11px; }
.tab i { width: 19px; height: 22px; border-top: 2px solid #4f8a96; background: #0d0b0b; }

/* Taskleiste */
.taskbar { height: 47px; display: flex; align-items: stretch; background: #1e1e1e; color: #f0f0f0; font-family: "Open Sans", "Noto Sans", sans-serif; font-weight: 400; }
.cell { width: 55px; display: flex; align-items: center; justify-content: center; }
.sep { width: 4px; height: 24px; align-self: center; border: solid #555; border-width: 0 1px; margin: 0 12px 0 6px; }
.apps { display: flex; }
.run { background: linear-gradient(#76b0e5, #76b0e5) center bottom / 44px 3px no-repeat; }
.run.current { background: linear-gradient(#76b0e5, #76b0e5) center bottom / 55px 3px no-repeat #4b4b4b; }
.tile { width: 28px; height: 28px; border-radius: 3px; display: block; color: #fff; line-height: 28px; text-align: center; font-family: "Liberation Sans", sans-serif; font-weight: 700; font-size: 9px; }
.mono { width: 26px; height: 26px; line-height: 26px; font-family: "DejaVu Sans Mono", monospace; font-size: 17px; font-weight: 400; }
.sky { background: #24689b; }
.pi { background: linear-gradient(120deg, #111 40%, #1f5a1c 60%, #a0481b 80%, #111); }
.keys { background: #a31c2c; }
.bass { background: #e22128; }
.pdf { background: #f58a20; border-radius: 0 7px 0 0; font-size: 7px; line-height: 8px; }
.pdf b { display: block; font-size: 19px; line-height: 19px; }
.word { width: 26px; height: 26px; background: repeating-linear-gradient(#fff 0, #fff 3px, #3a62a8 3px, #3a62a8 5px); border: 1px solid #e6ecf6; border-left: 7px solid #6e8fc8; }
.word b { display: block; width: 12px; background: #fff; color: #2b579a; font-size: 12px; line-height: 14px; }
.skype { width: 25px; height: 25px; border-radius: 50%; background: #079fe3; color: #fff; font-weight: 700; font-size: 17px; line-height: 25px; }
.devil { position: relative; width: 28px; height: 28px; }
.devil b { position: absolute; left: 9px; top: 11px; font-size: 7px; line-height: 8px; color: #ffe27a; }
.live-icon { width: 24px; height: 25px; line-height: 25px; background: #282b2b; font-weight: 400; font-size: 11px; }
.tray { margin-left: auto; display: flex; align-items: center; }
.tray > svg { margin-left: 13px; }
.tray .sep { margin: 0 10px 0 0; }
.desktop + .more { margin: -28px 0 0 6px; font-size: 16px; }
.tray .more + svg { margin-left: 11px; }
.tray span + .clock { width: 90px; margin-left: 4px; line-height: 22px; text-align: center; }
.tray svg + span { margin-left: 17px; }
.tray .note { margin-left: 13px; }
.edge { width: 1px; height: 47px; margin: 0 5px 0 23px; background: #555; }
```
